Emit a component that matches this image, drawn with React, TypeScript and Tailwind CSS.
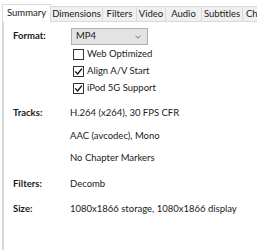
import React from "react";

const font = { fontFamily: 'Lato, "Noto Sans", sans-serif' };

function Check({ checked, label }: { checked: boolean; label: string }) {
  return (
    <div className="flex items-center h-[17px]">
      <div className="w-[11px] h-[11px] border border-[#333] bg-white flex items-center justify-center shrink-0">
        {checked && (
          <svg width="9" height="9" viewBox="0 0 9 9">
            <path d="M1.2 4.4 L3.6 7 L7.9 1.6" fill="none" stroke="#111" strokeWidth="1.4" />
          </svg>
        )}
      </div>
      <span className="ml-[3px] text-[9.5px] text-[#1a1a1a] whitespace-nowrap">{label}</span>
    </div>
  );
}

function Label({ children }: { children: React.ReactNode }) {
  return <div className="w-[57px] shrink-0 font-bold text-[9.5px] text-[#1a1a1a]">{children}</div>;
}

const tabs: [string, string][] = [
  ["Dimensions", "w-[52px]"],
  ["Filters", "w-[34px]"],
  ["Video", "w-[29px]"],
  ["Audio", "w-[36px]"],
  ["Subtitles", "w-[41px]"],
  ["Chapters", "w-[44px] justify-start pl-[3px]"],
];

export default function App() {
  return (
    <div className="w-[257px] h-[250px] bg-white overflow-hidden flex flex-col pl-[2px]" style={font}>
      <div className="flex items-end h-[21px] shrink-0 whitespace-nowrap">
        <div className="w-[49px] h-[18px] bg-white border border-b-0 border-[#d9d9d9] text-[9.5px] text-[#1a1a1a] flex items-center justify-center pb-[1px] relative z-10 -mb-px shrink-0">
          Summary
        </div>
        {tabs.map(([t, w]) => (
          <div
            key={t}
            className={
              w +
              " h-[15px] bg-[#f0f0f0] border border-l-0 border-b-0 border-[#d9d9d9] text-[9.5px] text-[#1a1a1a] shrink-0 flex items-center justify-center overflow-hidden"
            }
          >
            {t}
          </div>
        ))}
      </div>
      <div className="flex-1 border-l-2 border-t border-[#d9d9d9] pl-[9px] pt-[6px] text-[#1a1a1a]">
        <div className="flex items-center h-[17px]">
          <Label>Format:</Label>
          <div className="ml-[1px] w-[77px] h-[17px] border border-[#adadad] bg-[#e3e3e3] flex items-center justify-between pl-[4px] pr-[6px] text-[9.5px]">
            <span>MP4</span>
            <svg width="6" height="4" viewBox="0 0 6 4">
              <path d="M0.5 0.8 L3 3.2 L5.5 0.8" fill="none" stroke="#666" strokeWidth="0.9" />
            </svg>
          </div>
        </div>
        <div className="pl-[60px] pt-[1px]">
          <Check checked={false} label="Web Optimized" />
          <Check checked={true} label="Align A/V Start" />
          <Check checked={true} label="iPod 5G Support" />
        </div>
        <div className="flex mt-[5px] text-[9.5px] leading-[22.5px]">
          <Label>Tracks:</Label>
          <div>
            <div>H.264 (x264), 30 FPS CFR</div>
            <div>AAC (avcodec), Mono</div>
            <div>No Chapter Markers</div>
          </div>
        </div>
        <div className="flex text-[9.5px] leading-[25px] mt-[1px]">
          <Label>Filters:</Label>
          <div>Decomb</div>
        </div>
        <div className="flex text-[9.5px] leading-[25px] whitespace-nowrap">
          <Label>Size:</Label>
          <div>1080x1866 storage, 1080x1866 display</div>
        </div>
      </div>
    </div>
  );
}
